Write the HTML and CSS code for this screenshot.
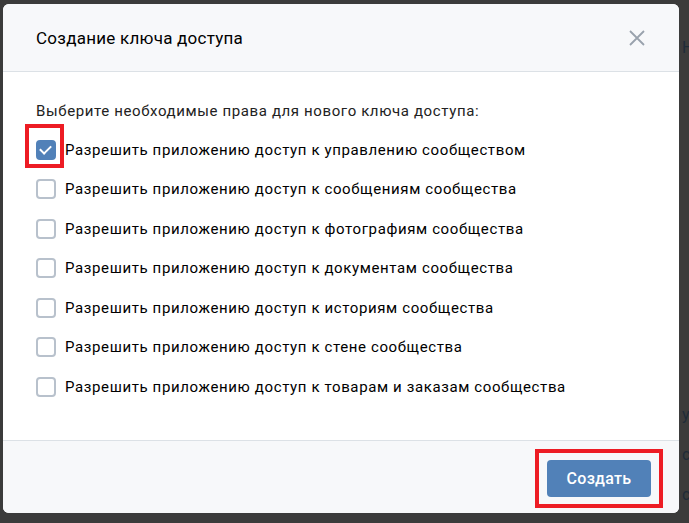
FILE: index.html
```html
<!DOCTYPE html>
<html>
<head>
    <meta charset="utf-8">
    <title>Создание ключа доступа</title>
    <link rel="stylesheet" href="styles.css">
</head>
<body>
<div class="screen">
    <div class="modal">
        <div class="modal-head">
            <span class="modal-title">Создание ключа доступа</span>
            <button class="close" aria-label="Закрыть">
                <svg width="16" height="16" viewBox="0 0 16 16">
                    <path d="M1 1 L15 15 M15 1 L1 15" stroke="#99a2ad" stroke-width="1.8" fill="none"/>
                </svg>
            </button>
        </div>
        <div class="modal-body">
            <p class="intro">Выберите необходимые права для нового ключа доступа:</p>
            <ul class="rights">
                <li class="right marked"><span class="check on"></span>Разрешить приложению доступ к управлению сообществом</li>
                <li class="right"><span class="check"></span>Разрешить приложению доступ к сообщениям сообщества</li>
                <li class="right"><span class="check"></span>Разрешить приложению доступ к фотографиям сообщества</li>
                <li class="right"><span class="check"></span>Разрешить приложению доступ к документам сообщества</li>
                <li class="right"><span class="check"></span>Разрешить приложению доступ к историям сообщества</li>
                <li class="right"><span class="check"></span>Разрешить приложению доступ к стене сообщества</li>
                <li class="right"><span class="check"></span>Разрешить приложению доступ к товарам и заказам сообщества</li>
            </ul>
        </div>
        <div class="modal-foot">
            <div class="highlight">
                <button class="create">Создать</button>
            </div>
        </div>
    </div>
    <div class="behind">
        <span class="behind-top">Н</span>
        <span class="behind-letters">у<br>с<br>с</span>
    </div>
</div>
</body>
</html>
```

FILE: styles.css
```css
html, body {
    margin: 0;
    height: 100%;
}

body {
    background-color: #3b3b3b;
    font-family: Roboto, "Noto Sans", Arial, sans-serif;
    color: #000;
    overflow: hidden;
}

.screen {
    display: flex;
    padding: 4px 0 0 3px;
}

.modal {
    width: 676px;
    height: 509px;
    flex: none;
    display: flex;
    flex-direction: column;
    background-color: #fff;
    border-radius: 6px;
    overflow: hidden;
}

.modal-head {
    height: 67px;
    flex: none;
    display: flex;
    align-items: center;
    justify-content: space-between;
    padding: 0 34px 0 33px;
    background-color: #f7f8fa;
    border-bottom: 1px solid #dce1e6;
}

.modal-title {
    font-size: 17px;
    letter-spacing: 0.25px;
    color: #000;
}

.close {
    border: 0;
    padding: 0;
    background: none;
    display: flex;
}

.modal-body {
    flex: 1;
    padding: 30px 33px 0;
}

.intro {
    margin: 0 0 10px;
    font-size: 15px;
    letter-spacing: 0.62px;
    color: #222;
}

.rights {
    list-style: none;
    margin: 0;
    padding: 0;
}

.right {
    display: flex;
    align-items: center;
    height: 39.5px;
    font-size: 15px;
    letter-spacing: 0.62px;
    color: #000;
    position: relative;
}

.check {
    width: 16px;
    height: 16px;
    border: 2px solid #b8c1cc;
    border-radius: 4px;
    margin-right: 9px;
    flex: none;
    box-sizing: content-box;
    position: relative;
}

.check.on {
    background-color: #5181b8;
    border-color: #5181b8;
}

.check.on::after {
    content: "";
    position: absolute;
    left: 4px;
    top: 1px;
    width: 5px;
    height: 9px;
    border: solid #fff;
    border-width: 0 2.2px 2.2px 0;
    transform: rotate(45deg);
}

.marked::before {
    content: "";
    position: absolute;
    left: -11px;
    top: -6px;
    width: 31px;
    height: 36px;
    border: 4px solid #ed1c24;
}

.modal-foot {
    height: 72px;
    flex: none;
    display: flex;
    align-items: center;
    justify-content: flex-end;
    padding-right: 16px;
    background-color: #f7f8fa;
    border-top: 1px solid #dce1e6;
}

.highlight {
    border: 4px solid #ed1c24;
    padding: 7px 8px;
    margin-top: 2px;
}

.create {
    display: block;
    width: 104px;
    height: 37px;
    border: 0;
    border-radius: 4px;
    background-color: #5181b8;
    color: #fff;
    font-family: inherit;
    font-size: 16px;
    font-weight: 500;
    letter-spacing: 0.3px;
}

.behind {
    flex: 1;
    display: flex;
    flex-direction: column;
    padding-left: 3px;
    color: #1f2b38;
    font-size: 16px;
    overflow: hidden;
}

.behind-top {
    margin-top: 34px;
}

.behind-letters {
    margin-top: 338px;
    line-height: 40px;
}
```
